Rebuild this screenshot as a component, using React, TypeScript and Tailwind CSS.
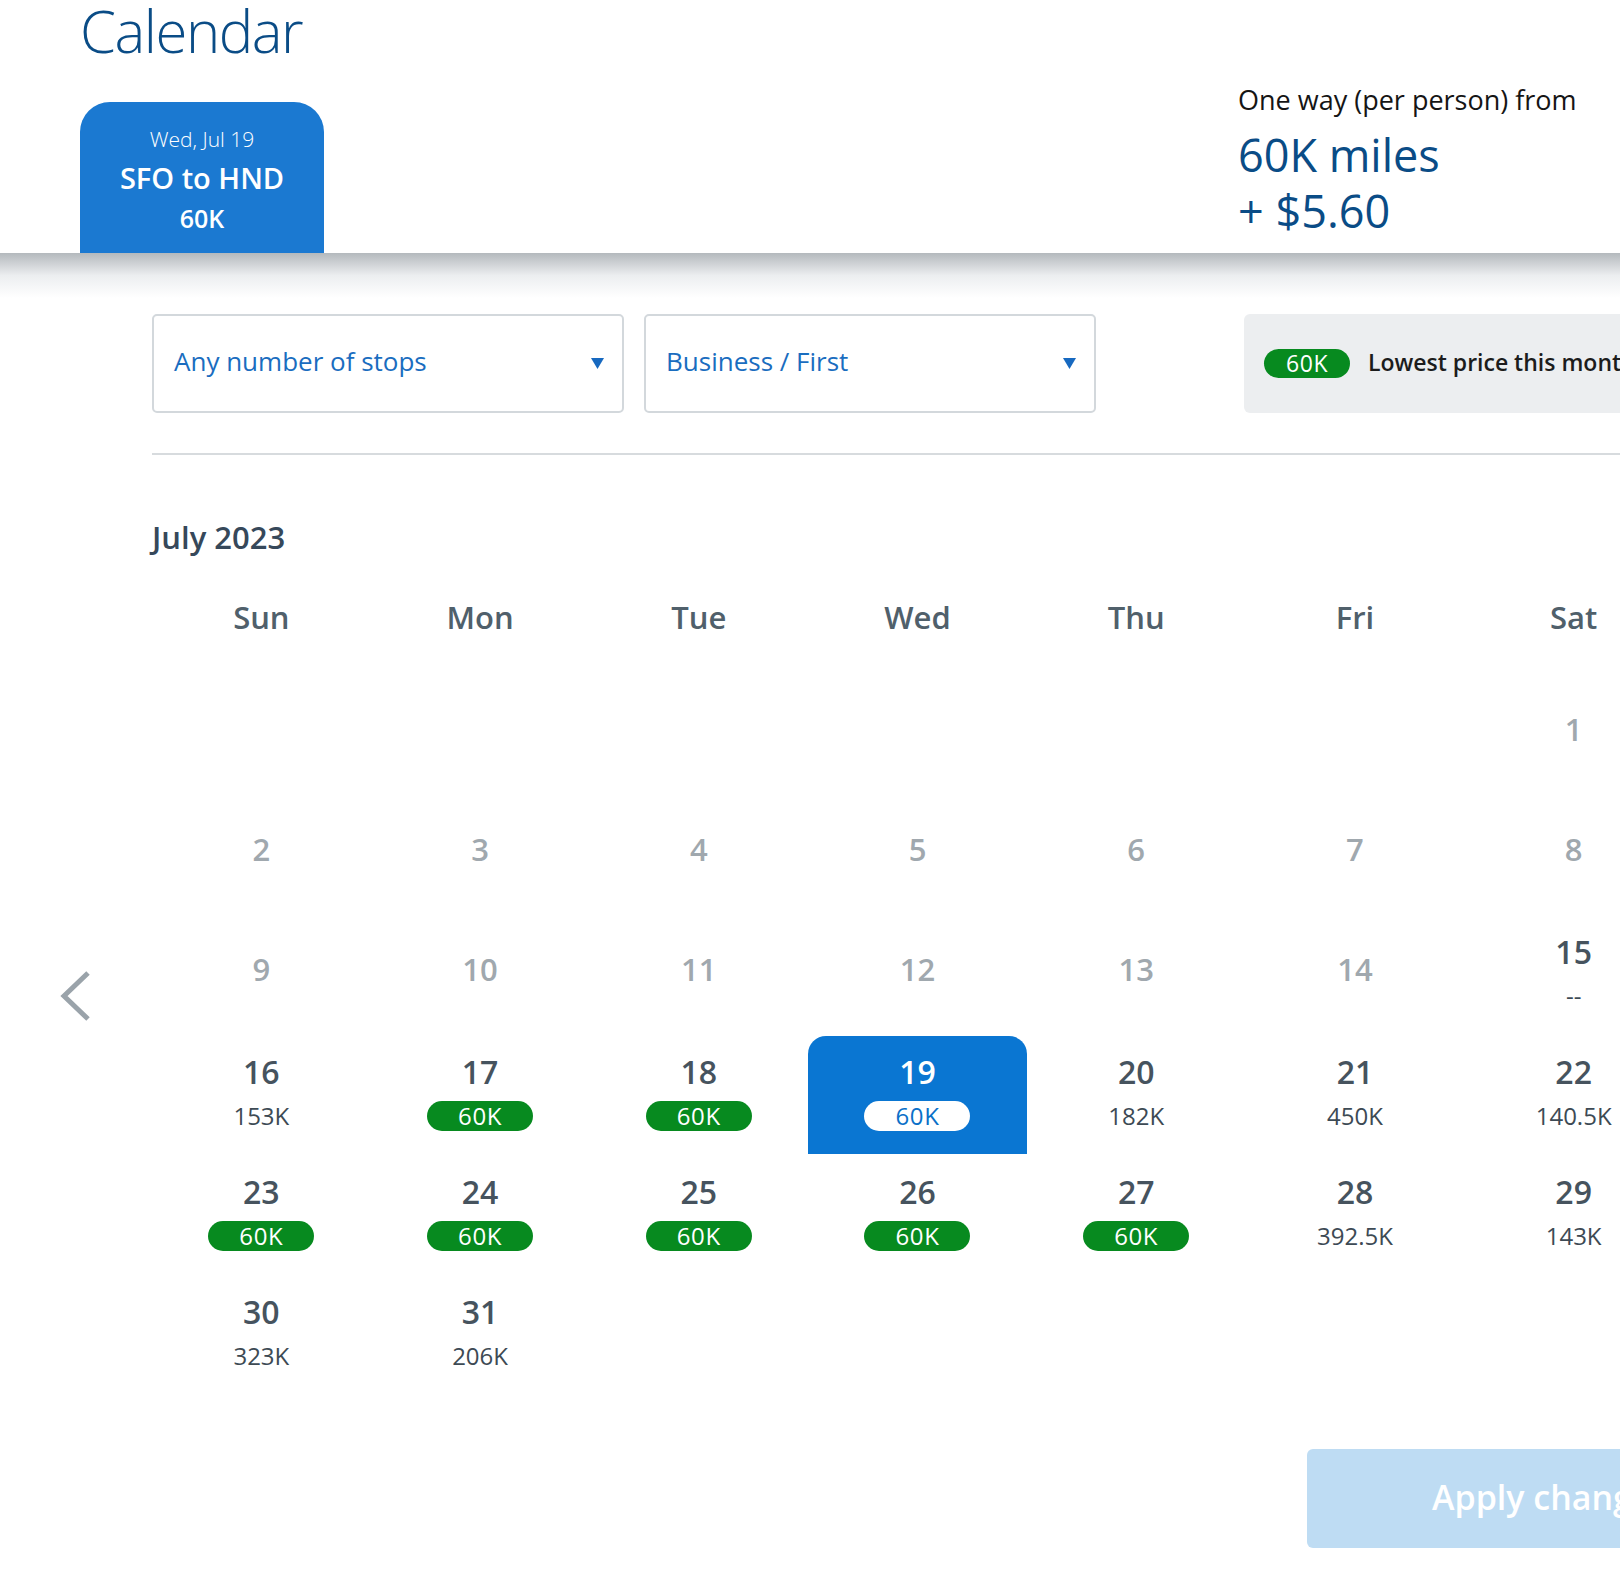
import React from 'react'

type Day = {
  n: number
  kind: 'past' | 'none' | 'price' | 'low' | 'selected'
  price?: string
}

const days: (Day | null)[] = [
  null, null, null, null, null, null,
  { n: 1, kind: 'past' },
  ...[2, 3, 4, 5, 6, 7, 8, 9, 10, 11, 12, 13, 14].map((n) => ({ n, kind: 'past' as const })),
  { n: 15, kind: 'none', price: '--' },
  { n: 16, kind: 'price', price: '153K' },
  { n: 17, kind: 'low', price: '60K' },
  { n: 18, kind: 'low', price: '60K' },
  { n: 19, kind: 'selected', price: '60K' },
  { n: 20, kind: 'price', price: '182K' },
  { n: 21, kind: 'price', price: '450K' },
  { n: 22, kind: 'price', price: '140.5K' },
  { n: 23, kind: 'low', price: '60K' },
  { n: 24, kind: 'low', price: '60K' },
  { n: 25, kind: 'low', price: '60K' },
  { n: 26, kind: 'low', price: '60K' },
  { n: 27, kind: 'low', price: '60K' },
  { n: 28, kind: 'price', price: '392.5K' },
  { n: 29, kind: 'price', price: '143K' },
  { n: 30, kind: 'price', price: '323K' },
  { n: 31, kind: 'price', price: '206K' },
]

const weekdays = ['Sun', 'Mon', 'Tue', 'Wed', 'Thu', 'Fri', 'Sat']

const Caret = () => (
  <svg width="13" height="11" viewBox="0 0 13 11" className="shrink-0">
    <path d="M0 0 H13 L6.5 11 Z" fill="#1769c0" />
  </svg>
)

const Select = ({ label, width }: { label: string; width: string }) => (
  <div
    className={`${width} flex h-[99px] shrink-0 items-center justify-between rounded-[5px] border-2 border-[#d3d8dc] bg-white pl-[20px] pr-[18px]`}
  >
    <span className="-mt-[4px] text-[26px] text-[#1a6dbf]">{label}</span>
    <Caret />
  </div>
)

const Cell = ({ day }: { day: Day | null }) => {
  if (!day) return <div className="h-[120px]" />

  if (day.kind === 'past') {
    return (
      <div className="flex h-[120px] justify-center pt-[33px]">
        <span className="text-[31px] font-semibold leading-[40px] text-[#a0a8ae]">{day.n}</span>
      </div>
    )
  }

  if (day.kind === 'selected') {
    return (
      <div className="flex h-[118px] flex-col items-center rounded-t-[18px] bg-[#0a76d2] pt-[16px]">
        <span className="text-[32px] font-semibold leading-[40px] text-white">{day.n}</span>
        <span className="mt-[9px] flex h-[30px] w-[106px] items-center justify-center rounded-full bg-white text-[24px] font-medium tracking-wide text-[#0a70c8]">
          {day.price}
        </span>
      </div>
    )
  }

  return (
    <div className="flex h-[120px] flex-col items-center pt-[16px]">
      <span className="text-[32px] font-semibold leading-[40px] text-[#46535e]">{day.n}</span>
      {day.kind === 'low' ? (
        <span className="mt-[9px] flex h-[30px] w-[106px] items-center justify-center rounded-full bg-[#078a1f] text-[24px] font-medium tracking-wide text-white">
          {day.price}
        </span>
      ) : (
        <span className="mt-[9px] h-[30px] text-[24px] font-medium leading-[30px] text-[#3d4a54]">{day.price}</span>
      )}
    </div>
  )
}

const App: React.FC = () => {
  return (
    <div
      className="relative h-[1595px] w-[1620px] overflow-hidden bg-white"
      style={{ fontFamily: '"Open Sans", "Noto Sans", sans-serif' }}
    >
      {/* header */}
      <div className="flex h-[253px] justify-between bg-white pl-[80px]">
        <div className="flex flex-col">
          <h1 className="mt-[2px] text-[58px] font-light leading-none tracking-tight text-[#0a4c86]">Calendar</h1>
          <div className="mt-[42px] flex h-[151px] w-[244px] flex-col items-center rounded-t-[30px] bg-[#1b79d1] pt-[21px] text-white">
            <span className="text-[21px] font-light leading-[32px]">Wed, Jul 19</span>
            <span className="mt-[4px] text-[29px] font-semibold leading-[38px]">SFO to HND</span>
            <span className="mt-[2px] text-[25px] font-semibold leading-[38px]">60K</span>
          </div>
        </div>
        <div className="w-[382px] pt-[83px]">
          <div className="text-[27px] leading-[34px] text-[#151515]">One way (per person) from</div>
          <div className="mt-[10px] text-[45px] leading-[56px] text-[#0a4c86]">60K miles</div>
          <div className="text-[45px] leading-[56px] text-[#0a4c86]">+ $5.60</div>
        </div>
      </div>
      <div className="h-[45px] bg-linear-to-b from-[#b4b9bd] via-[#eceef0] to-white" />

      {/* body */}
      <div className="flex">
        <div className="w-[152px] shrink-0 pl-[58px] pt-[672px]">
          <svg width="34" height="52" viewBox="0 0 34 52">
            <path d="M30 3 L6 26 L30 49" fill="none" stroke="#9aa3aa" strokeWidth="5" />
          </svg>
        </div>

        <div className="flex min-w-0 flex-1 flex-col pt-[16px]">
          <div className="flex items-center">
            <Select label="Any number of stops" width="w-[472px]" />
            <div className="w-[20px] shrink-0" />
            <Select label="Business / First" width="w-[452px]" />
            <div className="ml-[148px] flex h-[99px] w-[480px] shrink-0 items-center gap-[18px] rounded-l-[6px] bg-[#eceef0] pl-[20px]">
              <span className="flex h-[29px] w-[86px] shrink-0 items-center justify-center rounded-full bg-[#078a1f] text-[23px] font-medium tracking-wide text-white">
                60K
              </span>
              <span className="-mt-[2px] whitespace-nowrap text-[23px] font-semibold text-[#1c1c1c]">
                Lowest price this month
              </span>
            </div>
          </div>

          <div className="mt-[40px] h-[2px] w-[1600px] shrink-0 bg-[#d7dbde]" />

          <div className="mt-[60px] text-[31px] font-semibold leading-[44px] text-[#36485a]">July 2023</div>

          <div className="mt-[28px] grid w-[1531px] shrink-0 grid-cols-7">
            {weekdays.map((d) => (
              <div key={d} className="text-center text-[31px] font-semibold leading-[60px] text-[#50606b]">
                {d}
              </div>
            ))}
          </div>

          <div className="mt-[29px] grid w-[1531px] shrink-0 grid-cols-7">
            {days.map((d, i) => (
              <Cell key={i} day={d} />
            ))}
          </div>

          <div className="ml-[1155px] mt-[53px] flex h-[99px] w-[480px] shrink-0 items-center rounded-[6px] bg-[#bedcf3] pl-[125px]">
            <span className="-mt-[2px] whitespace-nowrap text-[34px] font-semibold text-white">Apply changes</span>
          </div>
        </div>
      </div>
    </div>
  )
}

export default App
